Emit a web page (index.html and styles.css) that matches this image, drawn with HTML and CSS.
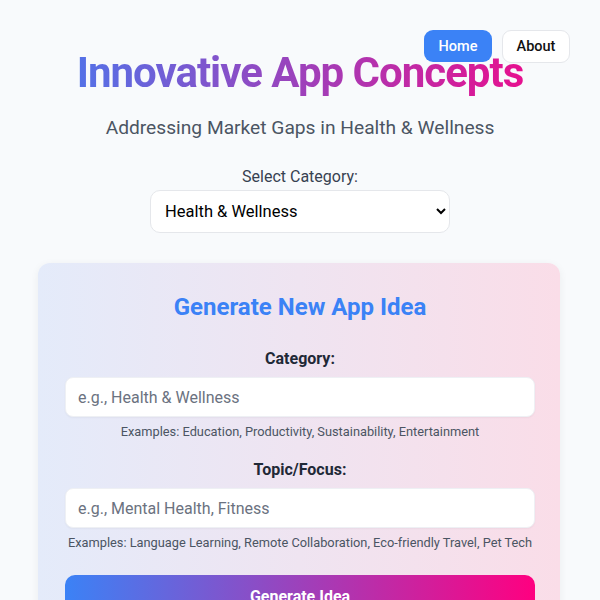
FILE: index.html
```html
<!DOCTYPE html>
<html lang="en">
<head>
<meta charset="utf-8">
<title>Innovative App Concepts</title>
<link rel="stylesheet" href="styles.css">
</head>
<body>
<nav class="nav">
  <a class="nav-btn nav-home" href="#">Home</a>
  <a class="nav-btn nav-about" href="#">About</a>
</nav>
<header class="header">
  <h1 class="title">Innovative App Concepts</h1>
  <p class="subtitle">Addressing Market Gaps in Health &amp; Wellness</p>
  <div class="picker">
    <label class="picker-label" for="cat">Select Category:</label>
    <select id="cat" class="picker-select">
      <option>Health &amp; Wellness</option>
      <option>Education</option>
      <option>Productivity</option>
    </select>
  </div>
</header>
<main class="card">
  <h2 class="card-title">Generate New App Idea</h2>
  <div class="field">
    <label class="field-label" for="c1">Category:</label>
    <input id="c1" class="field-input" type="text" placeholder="e.g., Health &amp; Wellness">
    <p class="field-hint">Examples: Education, Productivity, Sustainability, Entertainment</p>
  </div>
  <div class="field">
    <label class="field-label" for="c2">Topic/Focus:</label>
    <input id="c2" class="field-input" type="text" placeholder="e.g., Mental Health, Fitness">
    <p class="field-hint">Examples: Language Learning, Remote Collaboration, Eco-friendly Travel, Pet Tech</p>
  </div>
  <button class="gen-btn" type="button">Generate Idea</button>
</main>
</body>
</html>
```
FILE: styles.css
```css
* { box-sizing: border-box; }
html, body { margin: 0; padding: 0; }
body {
  background: #f8fafc;
  font-family: Roboto, "Liberation Sans", Arial, sans-serif;
  color: #1f2937;
  position: relative;
  min-height: 600px;
}
.nav {
  position: absolute;
  top: 30px;
  right: 30px;
  display: flex;
  gap: 10px;
  z-index: 2;
}
.nav-btn {
  display: flex;
  align-items: center;
  justify-content: center;
  width: 68px;
  height: 32px;
  border-radius: 9px;
  font-size: 14.5px;
  font-weight: 500;
  text-decoration: none;
}
.nav-home {
  background: #3b82f6;
  color: #ffffff;
}
.nav-about {
  background: #ffffff;
  color: #111111;
  border: 1px solid #e5e7eb;
  height: 33px;
}
.header {
  padding-top: 46px;
  text-align: center;
}
.title {
  margin: 0;
  font-size: 42px;
  letter-spacing: -1px;
  line-height: 53px;
  font-weight: 700;
  background: linear-gradient(90deg, #3b82f6, #ff0080);
  -webkit-background-clip: text;
  background-clip: text;
  color: transparent;
}
.subtitle {
  margin: 14px 0 0;
  font-size: 19.2px;
  line-height: 30px;
  color: #4b5563;
}
.picker {
  margin-top: 22px;
  display: flex;
  flex-direction: column;
  align-items: center;
}
.picker-label {
  font-size: 16px;
  line-height: 24px;
  color: #374151;
}
.picker-select {
  margin-top: 1px;
  width: 300px;
  height: 43px;
  padding: 0 10px 0 10px;
  font-family: Roboto, "Liberation Sans", Arial, sans-serif;
  font-size: 16.5px;
  color: #000000;
  background: #ffffff;
  border: 1px solid #e5e7eb;
  border-radius: 10px;
}
.card {
  margin: 30px 40px 0 38px;
  padding: 30px 25px 20px 27px;
  border-radius: 12px;
  background: linear-gradient(90deg, #e4ebfa, #fadde8);
  box-shadow: 0 2px 8px rgba(0, 0, 0, 0.06);
}
.card-title {
  margin: 0 0 25px;
  text-align: center;
  font-size: 24px;
  line-height: 29px;
  font-weight: 700;
  color: #3b82f6;
}
.field {
  display: flex;
  flex-direction: column;
  align-items: stretch;
  margin-bottom: 16px;
}
.field-label {
  text-align: center;
  font-size: 16px;
  line-height: 24px;
  font-weight: 700;
  color: #1f2937;
  margin-bottom: 6px;
}
.field-input {
  height: 40px;
  padding: 0 12px;
  font-family: Roboto, "Liberation Sans", Arial, sans-serif;
  font-size: 16px;
  color: #111111;
  background: #ffffff;
  border: 1px solid #eef0f4;
  border-radius: 8px;
  box-shadow: 0 1px 2px rgba(0, 0, 0, 0.04);
}
.field-input::placeholder { color: #6b7280; }
.field-hint {
  margin: 5px 0 0;
  text-align: center;
  font-size: 12.8px;
  line-height: 20px;
  color: #4b5563;
}
.gen-btn {
  display: block;
  width: 100%;
  height: 42px;
  margin-top: 22px;
  border: none;
  border-radius: 10px;
  background: linear-gradient(90deg, #3b82f6, #ff0080);
  color: #ffffff;
  font-family: Roboto, "Liberation Sans", Arial, sans-serif;
  font-size: 16px;
  font-weight: 700;
}
```
